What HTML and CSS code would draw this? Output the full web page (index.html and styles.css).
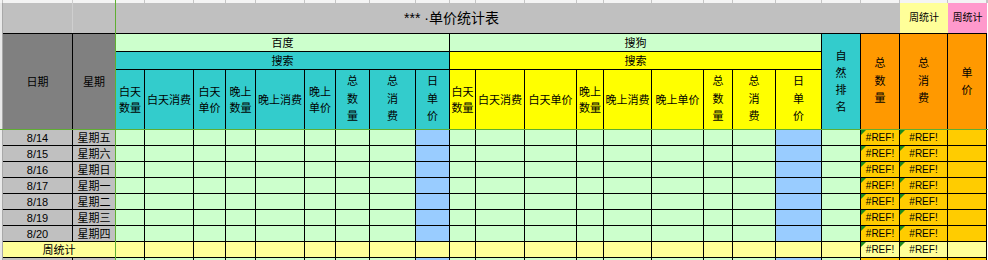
FILE: index.html
```html
<!DOCTYPE html>
<html lang="zh-CN">
<head>
<meta charset="utf-8">
<title>单价统计表</title>
<link rel="stylesheet" href="styles.css">
</head>
<body>
<div class="sheet">
  <div class="lstrip"></div>
  <div class="rstrip"></div>

  <i class="tk"></i><i class="tk"></i><i class="tk"></i><i class="tk"></i><i class="tk"></i><i class="tk"></i><i class="tk"></i><i class="tk"></i><i class="tk"></i><i class="tk"></i><i class="tk"></i><i class="tk"></i><i class="tk"></i><i class="tk"></i><i class="tk"></i><i class="tk"></i><i class="tk"></i><i class="tk"></i><i class="tk"></i><i class="tk"></i><i class="tk"></i><i class="tk"></i><i class="tk"></i><i class="tk"></i><i class="tk"></i><i class="tk"></i>

  <!-- title row -->
  <div class="c title gr">*** ·单价统计表</div>
  <div class="c wk y">周统计</div>
  <div class="c wk pk">周统计</div>

  <!-- group row 1 -->
  <div class="c r3 dk">日期</div>
  <div class="c r3 dk">星期</div>
  <div class="c s9 g">百度</div>
  <div class="c s9 g">搜狗</div>
  <div class="c r3 t"><span class="v">自<br>然<br>排<br>名</span></div>
  <div class="c r3 or"><span class="v2">总<br>数<br>量</span></div>
  <div class="c r3 or"><span class="v2">总<br>消<br>费</span></div>
  <div class="c r3 or"><span class="v">单<br>价</span></div>

  <!-- group row 2 -->
  <div class="c s9 t">搜索</div>
  <div class="c s9 ye">搜索</div>

  <!-- header row -->
  <div class="c t"><span class="h2">白天<br>数量</span></div>
  <div class="c t">白天消费</div>
  <div class="c t"><span class="h2">白天<br>单价</span></div>
  <div class="c t"><span class="h2">晚上<br>数量</span></div>
  <div class="c t">晚上消费</div>
  <div class="c t"><span class="h2">晚上<br>单价</span></div>
  <div class="c t"><span class="v2">总<br>数<br>量</span></div>
  <div class="c t"><span class="v2">总<br>消<br>费</span></div>
  <div class="c t"><span class="v2">日<br>单<br>价</span></div>
  <div class="c ye"><span class="h2">白天<br>数量</span></div>
  <div class="c ye">白天消费</div>
  <div class="c ye">白天单价</div>
  <div class="c ye"><span class="h2">晚上<br>数量</span></div>
  <div class="c ye">晚上消费</div>
  <div class="c ye">晚上单价</div>
  <div class="c ye"><span class="v2">总<br>数<br>量</span></div>
  <div class="c ye"><span class="v2">总<br>消<br>费</span></div>
  <div class="c ye"><span class="v2">日<br>单<br>价</span></div>

  <!-- data rows -->
  <div class="c gr">8/14</div><div class="c gr">星期五</div>
  <div class="c g"></div><div class="c g"></div><div class="c g"></div><div class="c g"></div><div class="c g"></div><div class="c g"></div><div class="c g"></div><div class="c g"></div><div class="c b"></div>
  <div class="c g"></div><div class="c g"></div><div class="c g"></div><div class="c g"></div><div class="c g"></div><div class="c g"></div><div class="c g"></div><div class="c g"></div><div class="c b"></div>
  <div class="c g"></div><div class="c o ref">#REF!</div><div class="c o ref">#REF!</div><div class="c o"></div>

  <div class="c gr">8/15</div><div class="c gr">星期六</div>
  <div class="c g"></div><div class="c g"></div><div class="c g"></div><div class="c g"></div><div class="c g"></div><div class="c g"></div><div class="c g"></div><div class="c g"></div><div class="c b"></div>
  <div class="c g"></div><div class="c g"></div><div class="c g"></div><div class="c g"></div><div class="c g"></div><div class="c g"></div><div class="c g"></div><div class="c g"></div><div class="c b"></div>
  <div class="c g"></div><div class="c o ref">#REF!</div><div class="c o ref">#REF!</div><div class="c o"></div>

  <div class="c gr">8/16</div><div class="c gr">星期日</div>
  <div class="c g"></div><div class="c g"></div><div class="c g"></div><div class="c g"></div><div class="c g"></div><div class="c g"></div><div class="c g"></div><div class="c g"></div><div class="c b"></div>
  <div class="c g"></div><div class="c g"></div><div class="c g"></div><div class="c g"></div><div class="c g"></div><div class="c g"></div><div class="c g"></div><div class="c g"></div><div class="c b"></div>
  <div class="c g"></div><div class="c o ref">#REF!</div><div class="c o ref">#REF!</div><div class="c o"></div>

  <div class="c gr">8/17</div><div class="c gr">星期一</div>
  <div class="c g"></div><div class="c g"></div><div class="c g"></div><div class="c g"></div><div class="c g"></div><div class="c g"></div><div class="c g"></div><div class="c g"></div><div class="c b"></div>
  <div class="c g"></div><div class="c g"></div><div class="c g"></div><div class="c g"></div><div class="c g"></div><div class="c g"></div><div class="c g"></div><div class="c g"></div><div class="c b"></div>
  <div class="c g"></div><div class="c o ref">#REF!</div><div class="c o ref">#REF!</div><div class="c o"></div>

  <div class="c gr">8/18</div><div class="c gr">星期二</div>
  <div class="c g"></div><div class="c g"></div><div class="c g"></div><div class="c g"></div><div class="c g"></div><div class="c g"></div><div class="c g"></div><div class="c g"></div><div class="c b"></div>
  <div class="c g"></div><div class="c g"></div><div class="c g"></div><div class="c g"></div><div class="c g"></div><div class="c g"></div><div class="c g"></div><div class="c g"></div><div class="c b"></div>
  <div class="c g"></div><div class="c o ref">#REF!</div><div class="c o ref">#REF!</div><div class="c o"></div>

  <div class="c gr">8/19</div><div class="c gr">星期三</div>
  <div class="c g"></div><div class="c g"></div><div class="c g"></div><div class="c g"></div><div class="c g"></div><div class="c g"></div><div class="c g"></div><div class="c g"></div><div class="c b"></div>
  <div class="c g"></div><div class="c g"></div><div class="c g"></div><div class="c g"></div><div class="c g"></div><div class="c g"></div><div class="c g"></div><div class="c g"></div><div class="c b"></div>
  <div class="c g"></div><div class="c o ref">#REF!</div><div class="c o ref">#REF!</div><div class="c o"></div>

  <div class="c gr">8/20</div><div class="c gr">星期四</div>
  <div class="c g"></div><div class="c g"></div><div class="c g"></div><div class="c g"></div><div class="c g"></div><div class="c g"></div><div class="c g"></div><div class="c g"></div><div class="c b"></div>
  <div class="c g"></div><div class="c g"></div><div class="c g"></div><div class="c g"></div><div class="c g"></div><div class="c g"></div><div class="c g"></div><div class="c g"></div><div class="c b"></div>
  <div class="c g"></div><div class="c o ref">#REF!</div><div class="c o ref">#REF!</div><div class="c o"></div>

  <!-- total row -->
  <div class="c s2 y">周统计</div>
  <div class="c y"></div><div class="c y"></div><div class="c y"></div><div class="c y"></div><div class="c y"></div><div class="c y"></div><div class="c y"></div><div class="c y"></div><div class="c y"></div>
  <div class="c y"></div><div class="c y"></div><div class="c y"></div><div class="c y"></div><div class="c y"></div><div class="c y"></div><div class="c y"></div><div class="c y"></div><div class="c y"></div>
  <div class="c y"></div><div class="c y ref">#REF!</div><div class="c y ref">#REF!</div><div class="c y"></div>

  <!-- partially visible next row -->
  <div class="c gr"></div><div class="c gr"></div>
  <div class="c g"></div><div class="c g"></div><div class="c g"></div><div class="c g"></div><div class="c g"></div><div class="c g"></div><div class="c g"></div><div class="c g"></div><div class="c b"></div>
  <div class="c g"></div><div class="c g"></div><div class="c g"></div><div class="c g"></div><div class="c g"></div><div class="c g"></div><div class="c g"></div><div class="c g"></div><div class="c b"></div>
  <div class="c g"></div><div class="c o ref"></div><div class="c o ref"></div><div class="c o"></div>

  <div class="gl"></div>
  <div class="freeze-v"></div>
  <div class="freeze-h"></div>
</div>
</body>
</html>
```

FILE: styles.css
```css
html, body {
  margin: 0;
  padding: 0;
  background: #ffffff;
}

body {
  width: 988px;
  height: 260px;
  overflow: hidden;
  font-family: "Liberation Sans", "Noto Sans CJK SC", sans-serif;
  font-size: 11px;
  color: #000000;
}

.sheet {
  position: relative;
  height: 260px;
  overflow: hidden;
  display: grid;
  grid-template-columns:
    3px 70px 43px
    29px 49px 32px 30px 49px 31px 34px 46px 34px
    26px 49px 52px 27px 48px 52px 29px 43px 46px
    39px 39px 48px 39px 1px;
  grid-template-rows: 3px 31px 18px 18px 60px repeat(8, 16px) 3px;
}

.lstrip {
  grid-column: 1;
  grid-row: 2 / -1;
  background: #e9e9e9;
  border-right: 1px solid #a8a8a8;
  box-sizing: border-box;
}

.rstrip {
  grid-column: 26;
  grid-row: 2 / -1;
  background: #ffffff;
}

.tk {
  display: block;
  box-sizing: border-box;
  background: #f4f4f4;
  border-right: 1px solid #c4c4c4;
}

.c {
  box-sizing: border-box;
  border-right: 1px solid #000000;
  border-bottom: 1px solid #000000;
  display: flex;
  align-items: center;
  justify-content: center;
  text-align: center;
  white-space: nowrap;
  overflow: hidden;
  line-height: 16px;
  position: relative;
}

.title {
  grid-column: span 22;
  border-right: none;
  font-size: 14px;
}

.wk {
  border-right: none;
  font-size: 10px;
}

.r3 { grid-row: span 3; }
.s9 { grid-column: span 9; }
.s2 { grid-column: span 2; }

.h2 { line-height: 16px; }
.v { line-height: 17px; }
.v2 { line-height: 17.5px; }

/* fills */
.gr { background: #c0c0c0; }
.dk { background: #808080; }
.g  { background: #ccffcc; }
.b  { background: #99ccff; }
.t  { background: #33cccc; }
.ye { background: #ffff00; }
.y  { background: #ffff99; }
.or { background: #ff9900; }
.o  { background: #ffcc00; }
.pk { background: #ff99cc; }

.ref {
  font-size: 10px;
}

.ref:not(:empty)::before {
  content: "";
  position: absolute;
  left: 0;
  top: 0;
  width: 0;
  height: 0;
  border-top: 5px solid #1e8a1e;
  border-right: 5px solid transparent;
}

/* gridline of the frozen pane inside the merged title */
.gl {
  position: absolute;
  left: 72px;
  top: 0;
  width: 1px;
  height: 33px;
  background: #cfcfcf;
}

/* Excel freeze-pane lines */
.freeze-v {
  position: absolute;
  left: 115px;
  top: 0;
  width: 1px;
  height: 260px;
  background: #5fae32;
}

.freeze-h {
  position: absolute;
  left: 0;
  top: 129px;
  width: 988px;
  height: 1px;
  background: #5fae32;
}
```
